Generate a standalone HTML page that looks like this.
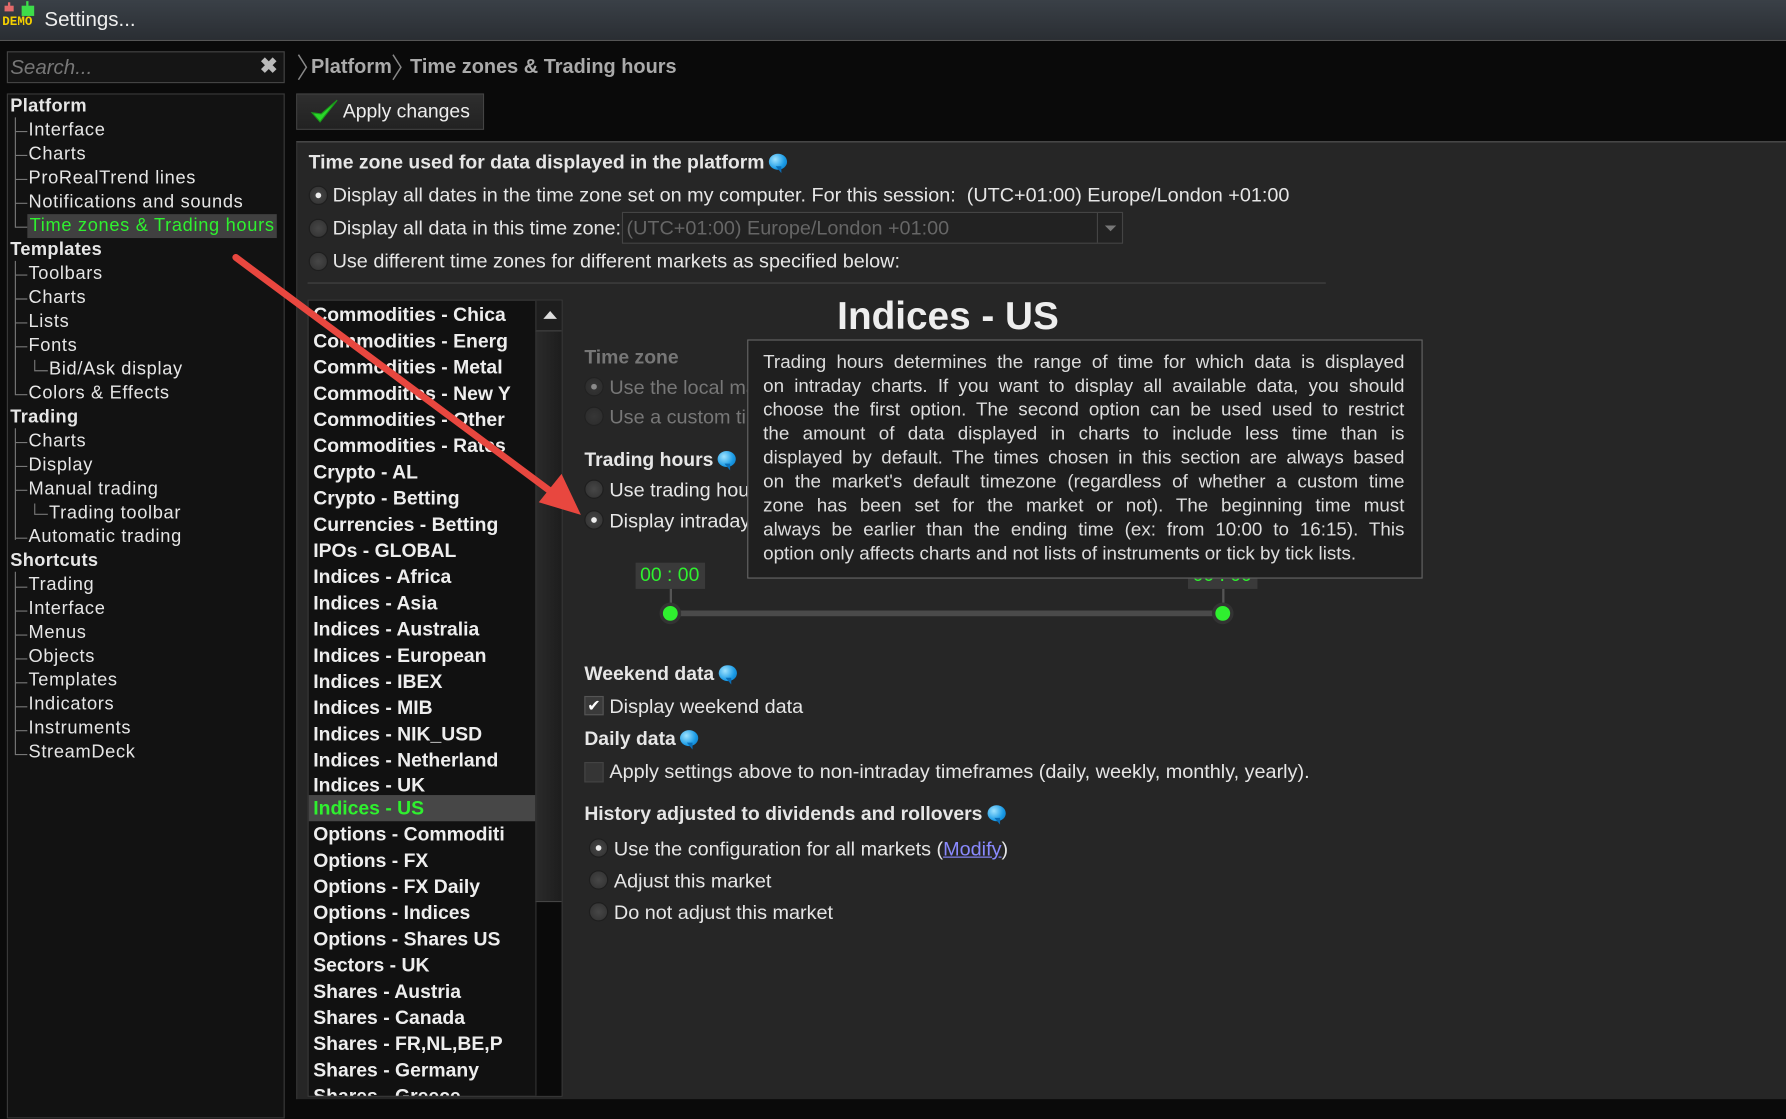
<!DOCTYPE html>
<html><head><meta charset="utf-8"><style>
html,body{margin:0;padding:0;width:1786px;height:1095px;overflow:hidden;background:#0a0a0a}
#w{position:absolute;left:0;top:0;width:1568px;height:961px;transform:scale(1.13903);transform-origin:0 0;font-family:"Liberation Sans",Arial,sans-serif;color:#e6e6e6}
.a{position:absolute;white-space:nowrap}
.tb{left:0;top:0;width:1568px;height:35px;background:linear-gradient(#3a4047,#2a2e33);border-bottom:1px solid #555}
.tree div{position:absolute;font-size:16px;line-height:21px;white-space:nowrap;letter-spacing:0.6px}
.tree .h{font-weight:bold;left:2px;letter-spacing:0.3px}
.tree .c{left:18px}
.tree .d{left:36px}
.list div{position:absolute;left:4px;font-size:17px;font-weight:bold;line-height:23px;white-space:nowrap;color:#eee}
.rad{position:absolute;width:17px;height:17px;border-radius:50%;background:radial-gradient(#474747,#303030);border:1px solid #1e1e1e;box-sizing:border-box}
.rad.on::after{content:"";position:absolute;left:5px;top:5px;width:5px;height:5px;border-radius:50%;background:#eee}
.t17{font-size:17.4px}
.b17{font-size:17px;font-weight:bold}
.bub{display:inline-block;width:16px;height:14px;border-radius:50%;background:radial-gradient(circle at 35% 35%,#9fe3ff,#1a9be6 60%,#0b6fb8);position:relative;vertical-align:-1px;margin-left:4px}
.bub::after{content:"";position:absolute;left:6px;top:11px;border-left:5px solid transparent;border-top:6px solid #0b6fb8;}
.tt div{height:21px;text-align:justify;text-align-last:justify;white-space:nowrap;overflow:hidden}
.tt div.l{text-align-last:left}
</style></head><body><div id="w">
<div class="a tb"></div>
<div class="a" style="left:4px;top:5px;width:8px;height:5px;background:#e46a6a"></div>
<div class="a" style="left:7px;top:2px;width:2px;height:4px;background:#e46a6a"></div>
<div class="a" style="left:19px;top:5px;width:11px;height:9px;background:#3ddc4a"></div>
<div class="a" style="left:23px;top:1px;width:2px;height:5px;background:#3ddc4a"></div>
<div class="a" style="left:2px;top:14px;font-size:11px;font-weight:bold;color:#f5d000;font-family:'Liberation Mono',monospace">DEMO</div>
<div class="a" style="left:39px;top:7px;font-size:18px;color:#eee">Settings...</div>

<div class="a" style="left:6px;top:45px;width:244px;height:28px;box-sizing:border-box;border:1px solid #444;background:#151515"></div>
<div class="a" style="left:9px;top:49px;font-size:18px;font-style:italic;color:#777">Search...</div>
<div class="a" style="left:228px;top:47px;font-size:19px;color:#bbb;font-weight:bold">✖</div>

<svg class="a" style="left:259px;top:46px" width="100" height="26" fill="none" stroke="#888" stroke-width="1.3"><path d="M3 2 L10 13 L3 24"/><path d="M86 2 L93 13 L86 24"/></svg>
<div class="a" style="left:273px;top:48px;font-size:17.5px;font-weight:bold;color:#aaa">Platform</div>
<div class="a" style="left:360px;top:48px;font-size:17.5px;font-weight:bold;color:#aaa">Time zones &amp; Trading hours</div>

<div class="a" style="left:260px;top:82px;width:165px;height:32px;box-sizing:border-box;border:1px solid #444;background:linear-gradient(#2e2e2e,#222)"></div>
<svg class="a" style="left:272px;top:86px" width="26" height="24"><path d="M2 13 L9 21 L24 2 L10 14 Z" fill="#2ad62a" stroke="#1a9a1a"/></svg>
<div class="a" style="left:301px;top:88px;font-size:17px;color:#eee">Apply changes</div>

<div class="a tree" style="left:6px;top:82px;width:244px;height:900px;box-sizing:border-box;border:1px solid #3a3a3a;background:#121212">
<svg class="a" style="left:0;top:0" width="60" height="600" stroke="#777" stroke-width="1" fill="none">
<path d="M6.5 20 V117 M6.5 32.5 H17 M6.5 53.5 H17 M6.5 74.5H17 M6.5 95.5H17 M6.5 116.5H17"/>
<path d="M6.5 146 V264 M6.5 158.5H17 M6.5 179.5H17 M6.5 200.5H17 M6.5 221.5H17 M6.5 263.5H17 M23.5 233 V243 M23.5 242.5H35"/>
<path d="M6.5 293 V391 M6.5 305.5H17 M6.5 326.5H17 M6.5 347.5H17 M6.5 389.5H17 M23.5 359V369 M23.5 368.5H35"/>
<path d="M6.5 419 V580 M6.5 432.5H17 M6.5 453.5H17 M6.5 474.5H17 M6.5 495.5H17 M6.5 516.5H17 M6.5 537.5H17 M6.5 558.5H17 M6.5 579.5H17"/>
</svg>
<div class="h" style="top:0">Platform</div>
<div class="c" style="top:21px">Interface</div>
<div class="c" style="top:42px">Charts</div>
<div class="c" style="top:63px">ProRealTrend lines</div>
<div class="c" style="top:84px">Notifications and sounds</div>
<div class="c" style="top:105px;background:#404040;color:#2ff02f;padding:0 2px;left:17px">Time zones &amp; Trading hours</div>
<div class="h" style="top:126px">Templates</div>
<div class="c" style="top:147px">Toolbars</div>
<div class="c" style="top:168px">Charts</div>
<div class="c" style="top:189px">Lists</div>
<div class="c" style="top:210px">Fonts</div>
<div class="d" style="top:231px">Bid/Ask display</div>
<div class="c" style="top:252px">Colors &amp; Effects</div>
<div class="h" style="top:273px">Trading</div>
<div class="c" style="top:294px">Charts</div>
<div class="c" style="top:315px">Display</div>
<div class="c" style="top:336px">Manual trading</div>
<div class="d" style="top:357px">Trading toolbar</div>
<div class="c" style="top:378px">Automatic trading</div>
<div class="h" style="top:399px">Shortcuts</div>
<div class="c" style="top:420px">Trading</div>
<div class="c" style="top:441px">Interface</div>
<div class="c" style="top:462px">Menus</div>
<div class="c" style="top:483px">Objects</div>
<div class="c" style="top:504px">Templates</div>
<div class="c" style="top:525px">Indicators</div>
<div class="c" style="top:546px">Instruments</div>
<div class="c" style="top:567px">StreamDeck</div>
</div>

<div class="a" style="left:260px;top:124px;width:1308px;height:840px;background:#262626;border-top:1px solid #555;border-left:1px solid #333"></div>
<div class="a b17" style="left:271px;top:133px">Time zone used for data displayed in the platform<span class="bub"></span></div>
<div class="rad on" style="left:271px;top:163px"></div>
<div class="a t17" style="left:292px;top:161px">Display all dates in the time zone set on my computer. For this session:&nbsp; (UTC+01:00) Europe/London +01:00</div>
<div class="rad" style="left:271px;top:192px"></div>
<div class="a t17" style="left:292px;top:190px">Display all data in this time zone:</div>
<div class="a" style="left:546px;top:186px;width:440px;height:28px;box-sizing:border-box;border:1px solid #444;background:#222"></div>
<div class="a" style="left:963px;top:187px;width:1px;height:26px;background:#444"></div>
<div class="a" style="left:970px;top:198px;border-left:5px solid transparent;border-right:5px solid transparent;border-top:5px solid #777"></div>
<div class="a t17" style="left:550px;top:190px;color:#666">(UTC+01:00) Europe/London +01:00</div>
<div class="rad" style="left:271px;top:221px"></div>
<div class="a t17" style="left:292px;top:219px">Use different time zones for different markets as specified below:</div>
<div class="a" style="left:270px;top:248px;width:894px;height:1px;background:#444"></div>

<div class="a list" style="left:270px;top:263px;width:224px;height:700px;box-sizing:border-box;border:1px solid #3a3a3a;background:#111;overflow:hidden">
<div style="top:1px">Commodities - Chica</div>
<div style="top:24px">Commodities - Energ</div>
<div style="top:47px">Commodities - Metal</div>
<div style="top:70px">Commodities - New Y</div>
<div style="top:93px">Commodities - Other</div>
<div style="top:116px">Commodities - Rates</div>
<div style="top:139px">Crypto - AL</div>
<div style="top:162px">Crypto - Betting</div>
<div style="top:185px">Currencies - Betting</div>
<div style="top:208px">IPOs - GLOBAL</div>
<div style="top:231px">Indices - Africa</div>
<div style="top:254px">Indices - Asia</div>
<div style="top:277px">Indices - Australia</div>
<div style="top:300px">Indices - European</div>
<div style="top:323px">Indices - IBEX</div>
<div style="top:346px">Indices - MIB</div>
<div style="top:369px">Indices - NIK_USD</div>
<div style="top:392px">Indices - Netherland</div>
<div style="top:414px">Indices - UK</div>
<div style="top:434px;left:0;width:199px;height:23px;background:#474747"></div>
<div style="top:434px;color:#2ff02f">Indices - US</div>
<div style="top:457px">Options - Commoditi</div>
<div style="top:480px">Options - FX</div>
<div style="top:503px">Options - FX Daily</div>
<div style="top:526px">Options - Indices</div>
<div style="top:549px">Options - Shares US</div>
<div style="top:572px">Sectors - UK</div>
<div style="top:595px">Shares - Austria</div>
<div style="top:618px">Shares - Canada</div>
<div style="top:641px">Shares - FR,NL,BE,P</div>
<div style="top:664px">Shares - Germany</div>
<div style="top:687px">Shares - Greece</div>
<div style="left:199px;top:0;width:24px;height:700px;background:#0a0a0a;border-left:1px solid #333"></div>
<div style="left:199px;top:0;width:24px;height:26px;background:#1e1e1e;border-left:1px solid #333;border-bottom:1px solid #444"></div>
<div style="left:206px;top:9px;width:0;height:0;border-left:6px solid transparent;border-right:6px solid transparent;border-bottom:7px solid #ddd"></div>
<div style="left:199px;top:27px;width:24px;height:500px;background:linear-gradient(90deg,#2a2a2a,#1c1c1c);border-left:1px solid #333;border-bottom:1px solid #444"></div>
</div>

<div class="a" style="left:735px;top:259px;font-size:34px;font-weight:bold;color:#eee">Indices - US</div>
<div class="a b17" style="left:513px;top:304px;color:#777">Time zone</div>
<div class="rad on" style="left:513px;top:331px;opacity:.5"></div>
<div class="a t17" style="left:535px;top:330px;color:#777">Use the local ma</div>
<div class="rad" style="left:513px;top:357px;opacity:.5"></div>
<div class="a t17" style="left:535px;top:356px;color:#777">Use a custom ti</div>
<div class="a b17" style="left:513px;top:394px">Trading hours<span class="bub"></span></div>
<div class="rad" style="left:513px;top:421px"></div>
<div class="a t17" style="left:535px;top:420px">Use trading hou</div>
<div class="rad on" style="left:513px;top:448px"></div>
<div class="a t17" style="left:535px;top:447px">Display intraday</div>

<div class="a" style="left:558px;top:494px;width:61px;height:23px;background:#3a3a3a"></div>
<div class="a" style="left:562px;top:495px;font-size:17px;color:#2ff02f">00 : 00</div>
<div class="a" style="left:1043px;top:494px;width:61px;height:23px;background:#3a3a3a"></div>
<div class="a" style="left:1047px;top:495px;font-size:17px;color:#2ff02f">00 : 00</div>
<div class="a" style="left:588px;top:517px;width:2px;height:20px;background:#555"></div>
<div class="a" style="left:1073px;top:517px;width:2px;height:20px;background:#555"></div>
<div class="a" style="left:590px;top:536px;width:484px;height:5px;background:#4a4a4a"></div>
<div class="a" style="left:579px;top:529px;width:19px;height:19px;border-radius:50%;background:#333"></div>
<div class="a" style="left:582px;top:532px;width:13px;height:13px;border-radius:50%;background:#2ff02f"></div>
<div class="a" style="left:1064px;top:529px;width:19px;height:19px;border-radius:50%;background:#333"></div>
<div class="a" style="left:1067px;top:532px;width:13px;height:13px;border-radius:50%;background:#2ff02f"></div>

<div class="a" style="left:656px;top:298px;width:593px;height:210px;box-sizing:border-box;border:1px solid #666;background:#1f1f1f"></div>
<div class="a tt" style="left:670px;top:308px;width:563px;font-size:16.5px;line-height:21px;white-space:normal;color:#ddd">
<div>Trading hours determines the range of time for which data is displayed</div>
<div>on intraday charts. If you want to display all available data, you should</div>
<div>choose the first option. The second option can be used used to restrict</div>
<div>the amount of data displayed in charts to include less time than is</div>
<div>displayed by default. The times chosen in this section are always based</div>
<div>on the market's default timezone (regardless of whether a custom time</div>
<div>zone has been set for the market or not). The beginning time must</div>
<div>always be earlier than the ending time (ex: from 10:00 to 16:15). This</div>
<div class="l">option only affects charts and not lists of instruments or tick by tick lists.</div>
</div>

<div class="a b17" style="left:513px;top:582px">Weekend data<span class="bub"></span></div>
<div class="a" style="left:513px;top:611px;width:17px;height:17px;box-sizing:border-box;border:1px solid #555;background:#3a3a3a;font-size:14px;line-height:15px;text-align:center;color:#fff">✔</div>
<div class="a t17" style="left:535px;top:610px">Display weekend data</div>
<div class="a b17" style="left:513px;top:639px">Daily data<span class="bub"></span></div>
<div class="a" style="left:513px;top:669px;width:17px;height:18px;box-sizing:border-box;border:1px solid #444;background:#353535"></div>
<div class="a t17" style="left:535px;top:667px">Apply settings above to non-intraday timeframes (daily, weekly, monthly, yearly).</div>
<div class="a b17" style="left:513px;top:705px">History adjusted to dividends and rollovers<span class="bub"></span></div>
<div class="rad on" style="left:517px;top:736px"></div>
<div class="a t17" style="left:539px;top:735px">Use the configuration for all markets (<span style="color:#8a8aff;text-decoration:underline">Modify</span>)</div>
<div class="rad" style="left:517px;top:764px"></div>
<div class="a t17" style="left:539px;top:763px">Adjust this market</div>
<div class="rad" style="left:517px;top:792px"></div>
<div class="a t17" style="left:539px;top:791px">Do not adjust this market</div>

<svg class="a" style="left:0;top:0" width="1568" height="961"><line x1="207" y1="226" x2="487" y2="434" stroke="#e8473f" stroke-width="6" stroke-linecap="round"/><path d="M510 452 L473 441 L493 416 Z" fill="#e8473f"/></svg>
</div></body></html>
